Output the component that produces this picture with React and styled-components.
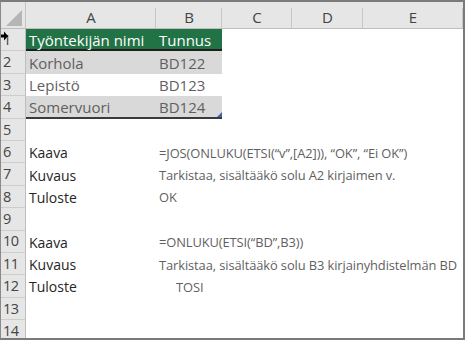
import React from "react";
import styled, { createGlobalStyle } from "styled-components";

const GlobalStyle = createGlobalStyle`
  html, body { margin: 0; padding: 0; background: #ffffff; }
  * { box-sizing: border-box; }
`;

const Sheet = styled.div`
  position: relative;
  width: 465px;
  height: 340px;
  border-top: 2px solid #7a7a7a;
  border-right: 2px solid #7a7a7a;
  border-bottom: 2px solid #7a7a7a;
  border-left: 1px solid #8a8a8a;
  display: grid;
  grid-template-columns: 25px 130px 66px 70px 71px 100px;
  grid-template-rows: 27px repeat(14, 22.4px);
  align-content: start;
  font-family: "Open Sans", "Noto Sans", sans-serif;
  background: #ffffff;
  overflow: hidden;
`;

const Corner = styled.div`
  position: relative;
  background: #e6e6e6;
  border-right: 1px solid #c4c4c4;
  border-bottom: 1px solid #bdbdbd;
  display: flex;
  align-items: flex-end;
  justify-content: flex-end;
  padding: 0 3px 2px 0;
`;

const ColHeader = styled.div`
  position: relative;
  background: #e6e6e6;
  border-bottom: 1px solid #bdbdbd;
  color: #444444;
  font-size: 15px;
  display: flex;
  align-items: center;
  justify-content: center;
  padding-top: 3px;
  &::after {
    content: "";
    position: absolute;
    right: 0;
    top: 6px;
    bottom: 0;
    width: 1px;
    background: #c6c6c6;
  }
`;

const RowHeader = styled.div`
  background: #e6e6e6;
  border-right: 1px solid #bdbdbd;
  border-bottom: 1px solid #cdcdcd;
  color: #444444;
  font-size: 14.5px;
  letter-spacing: -0.6px;
  display: flex;
  align-items: center;
  padding-left: 2px;
  padding-top: 1px;
  line-height: 1;
`;

const Cell = styled.div`
  position: relative;
  grid-column: span ${(p) => p.$span || 1};
  background: ${(p) => p.$fill || "transparent"};
  color: ${(p) => p.$color || "#262626"};
  font-size: ${(p) => p.$size || "14px"};
  letter-spacing: ${(p) => p.$track || "0"};
  padding-left: ${(p) => p.$indent || "3px"};
  padding-top: 2px;
  border-bottom: ${(p) => (p.$rule ? `2px solid ${p.$rule}` : "none")};
  display: flex;
  align-items: center;
  white-space: nowrap;
  line-height: 1;
`;

const Handle = styled.span`
  position: absolute;
  right: 0;
  bottom: 0;
  width: 0;
  height: 0;
  border-left: 5px solid transparent;
  border-bottom: 5px solid #3a64b8;
`;

const Cursor = styled.svg`
  position: absolute;
  left: 0;
  top: 29px;
`;

const GREEN = "#217346";
const BAND = "#d9d9d9";
const SOFT = "#5f5f5f";

const tableRows = [
  { a: "Korhola", b: "BD122", fill: BAND },
  { a: "Lepistö", b: "BD123", fill: "#ffffff" },
  { a: "Somervuori", b: "BD124", fill: BAND, last: true },
];

const lower = [
  null,
  { a: "Kaava", b: "=JOS(ONLUKU(ETSI(“v”,[A2])), “OK”, “Ei OK”)" },
  { a: "Kuvaus", b: "Tarkistaa, sisältääkö solu A2 kirjaimen v." },
  { a: "Tuloste", b: "OK" },
  null,
  { a: "Kaava", b: "=ONLUKU(ETSI(“BD”,B3))" },
  { a: "Kuvaus", b: "Tarkistaa, sisältääkö solu B3 kirjainyhdistelmän BD" },
  { a: "Tuloste", b: "TOSI", indent: "20px" },
  null,
  null,
];

export default function App() {
  return (
    <>
      <GlobalStyle />
      <Sheet>
        <Corner>
          <svg width="16" height="16" viewBox="0 0 16 16">
            <polygon points="16,0 16,16 0,16" fill="#b5b5b5" />
          </svg>
        </Corner>
        {["A", "B", "C", "D", "E"].map((c) => (
          <ColHeader key={c}>{c}</ColHeader>
        ))}

        <RowHeader>1</RowHeader>
        <Cell $fill={GREEN} $color="#ffffff" $size="15px" $rule="#1e1e1e">
          Työntekijän nimi
        </Cell>
        <Cell $fill={GREEN} $color="#ffffff" $size="15px" $rule="#1e1e1e">
          Tunnus
        </Cell>
        <Cell $span={3} />

        {tableRows.map((r, i) => (
          <React.Fragment key={r.b}>
            <RowHeader>{i + 2}</RowHeader>
            <Cell $fill={r.fill} $color={SOFT} $size="15px" $rule={r.last ? "#3a3a3a" : null}>
              {r.a}
            </Cell>
            <Cell $fill={r.fill} $color={SOFT} $size="15px" $rule={r.last ? "#3a3a3a" : null}>
              {r.b}
              {r.last && <Handle />}
            </Cell>
            <Cell $span={3} />
          </React.Fragment>
        ))}

        {lower.map((r, i) => (
          <React.Fragment key={i}>
            <RowHeader>{i + 5}</RowHeader>
            <Cell $size="14px">{r ? r.a : ""}</Cell>
            <Cell $span={4} $color={SOFT} $size="12.9px" $track="-0.1px" $indent={r && r.indent}>
              {r ? r.b : ""}
            </Cell>
          </React.Fragment>
        ))}

        <Cursor width="7" height="10" viewBox="0 0 7 10">
          <path d="M0 3.5 H3 V0.5 L7 5 L3 9.5 V6.5 H0 Z" fill="#000000" />
        </Cursor>
      </Sheet>
    </>
  );
}
